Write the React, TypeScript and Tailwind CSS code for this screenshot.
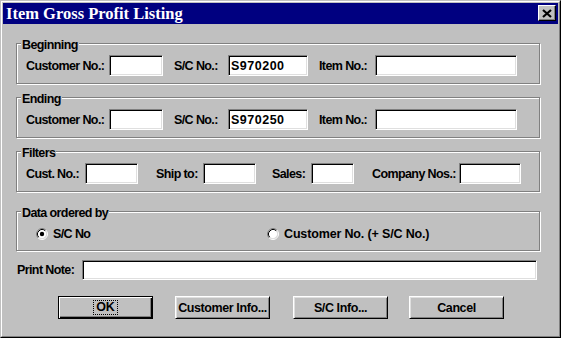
import React from "react";

const LBL = "text-[12.5px] font-bold tracking-[-0.6px] leading-[14px] whitespace-nowrap";
const BTXT = "text-[12.5px] font-bold tracking-[-0.4px] leading-[14px] whitespace-nowrap";

function Group({ label, className, children }: { label: string; className: string; children: React.ReactNode }) {
  return (
    <div
      className={`relative box-border w-[524px] border border-[#808080] shadow-[inset_1px_1px_0_#ffffff,1px_1px_0_#ffffff] ${className}`}
    >
      <span className={`absolute left-[4px] top-[-6px] bg-[#c0c0c0] px-[1px] ${LBL}`}>{label}</span>
      {children}
    </div>
  );
}

function Field({ className, value }: { className: string; value?: string }) {
  return (
    <div
      className={`box-border bg-white border border-t-[#808080] border-l-[#808080] border-r-white border-b-white shadow-[inset_1px_1px_0_#000000,inset_-1px_-1px_0_#dfdfdf] flex items-center pl-[1px] ${className}`}
    >
      {value ? (
        <span className="text-[12.5px] font-bold tracking-[0.5px] leading-[14px] pl-[1px]">{value}</span>
      ) : null}
    </div>
  );
}

function Radio({ checked }: { checked: boolean }) {
  return (
    <svg width="12" height="12" viewBox="0 0 12 12" className="shrink-0">
      <circle cx="6" cy="6" r="4.5" fill="#ffffff" />
      <path d="M2.11 9.89 A5.5 5.5 0 0 1 9.89 2.11" fill="none" stroke="#808080" strokeWidth="1" />
      <path d="M9.89 2.11 A5.5 5.5 0 0 1 2.11 9.89" fill="none" stroke="#ffffff" strokeWidth="1" />
      <path d="M2.82 9.18 A4.5 4.5 0 0 1 9.18 2.82" fill="none" stroke="#000000" strokeWidth="1" />
      <path d="M9.18 2.82 A4.5 4.5 0 0 1 2.82 9.18" fill="none" stroke="#dfdfdf" strokeWidth="1" />
      {checked ? <circle cx="6" cy="6" r="2.2" fill="#000000" /> : null}
    </svg>
  );
}

function Btn({ children, className, isDefault }: { children: React.ReactNode; className: string; isDefault?: boolean }) {
  const frame = isDefault
    ? "border border-black shadow-[inset_1px_1px_0_#ffffff,inset_-1px_-1px_0_#000000,inset_-2px_-2px_0_#808080]"
    : "border border-t-white border-l-white border-r-black border-b-black shadow-[inset_1px_1px_0_#dfdfdf,inset_-1px_-1px_0_#808080]";
  return (
    <div className={`box-border h-[23px] w-[95px] bg-[#c0c0c0] flex items-center justify-center ${frame} ${className}`}>
      {children}
    </div>
  );
}

export default function App() {
  return (
    <div className="w-[561px] h-[338px] box-border border border-t-[#c0c0c0] border-l-[#c0c0c0] border-r-black border-b-black bg-[#c0c0c0] font-['Liberation_Sans',Arial,sans-serif] text-black overflow-hidden">
      <div className="h-full box-border border border-t-white border-l-white border-r-[#808080] border-b-[#808080] p-[1px] flex flex-col">
        {/* Title bar */}
        <div className="h-[21px] shrink-0 bg-[#000080] flex items-start justify-between pl-[3px] pr-[2px]">
          <span className="font-['Liberation_Serif',serif] font-bold text-[16.5px] leading-[21px] text-white whitespace-nowrap">
            Item Gross Profit Listing
          </span>
          <div className="mt-[2px] box-border w-[18px] h-[16px] bg-[#c0c0c0] border border-t-white border-l-white border-r-black border-b-black shadow-[inset_-1px_-1px_0_#808080] flex items-center justify-center">
            <svg width="10" height="9" viewBox="0 0 10 9">
              <path d="M1 1 L9 8 M9 1 L1 8" stroke="#000000" strokeWidth="2.2" fill="none" />
            </svg>
          </div>
        </div>

        {/* Content */}
        <div className="flex flex-col pl-[13px]">
          <Group label="Beginning" className="mt-[19px] h-[41px] pt-[11px] pl-[9px]">
            <div className="flex items-center">
              <span className={`w-[83px] ${LBL}`}>Customer No.:</span>
              <Field className="w-[54px] h-[21px]" />
              <span className={`ml-[11px] w-[54px] ${LBL}`}>S/C No.:</span>
              <Field className="w-[80px] h-[21px]" value="S970200" />
              <span className={`ml-[11px] w-[56px] ${LBL}`}>Item No.:</span>
              <Field className="w-[142px] h-[21px]" />
            </div>
          </Group>

          <Group label="Ending" className="mt-[13px] h-[41px] pt-[11px] pl-[9px]">
            <div className="flex items-center">
              <span className={`w-[83px] ${LBL}`}>Customer No.:</span>
              <Field className="w-[54px] h-[21px]" />
              <span className={`ml-[11px] w-[54px] ${LBL}`}>S/C No.:</span>
              <Field className="w-[80px] h-[21px]" value="S970250" />
              <span className={`ml-[11px] w-[56px] ${LBL}`}>Item No.:</span>
              <Field className="w-[142px] h-[21px]" />
            </div>
          </Group>

          <Group label="Filters" className="mt-[13px] h-[41px] pt-[11px] pl-[9px]">
            <div className="flex items-center">
              <span className={`w-[59px] ${LBL}`}>Cust. No.:</span>
              <Field className="w-[53px] h-[21px]" />
              <span className={`ml-[18px] w-[47px] ${LBL}`}>Ship to:</span>
              <Field className="w-[53px] h-[21px]" />
              <span className={`ml-[16px] w-[39px] ${LBL}`}>Sales:</span>
              <Field className="w-[43px] h-[21px]" />
              <span className={`ml-[18px] w-[87px] ${LBL}`}>Company Nos.:</span>
              <Field className="w-[62px] h-[21px]" />
            </div>
          </Group>

          <Group label="Data ordered by" className="mt-[19px] h-[40px] pt-[15px] pl-[19px]">
            <div className="flex items-center">
              <div className="w-[231px] flex items-center">
                <Radio checked />
                <span className={`ml-[5px] ${LBL}`}>S/C No</span>
              </div>
              <div className="flex items-center">
                <Radio checked={false} />
                <span className="ml-[5px] text-[12.5px] font-bold tracking-[-0.15px] leading-[14px] whitespace-nowrap">
                  Customer No. (+ S/C No.)
                </span>
              </div>
            </div>
          </Group>

          <div className="mt-[9px] flex items-center pl-[1px]">
            <span className={`w-[65px] ${LBL}`}>Print Note:</span>
            <Field className="w-[455px] h-[20px]" />
          </div>

          <div className="mt-[16px] flex pl-[42px]">
            <Btn className="" isDefault>
              <span className="border border-dotted border-black px-[2px] leading-[13px] text-[12.5px] font-bold tracking-[-0.2px]">OK</span>
            </Btn>
            <Btn className="ml-[22px]">
              <span className={BTXT}>Customer Info...</span>
            </Btn>
            <Btn className="ml-[23px]">
              <span className={BTXT}>S/C Info...</span>
            </Btn>
            <Btn className="ml-[21px]">
              <span className={BTXT}>Cancel</span>
            </Btn>
          </div>
        </div>
      </div>
    </div>
  );
}
